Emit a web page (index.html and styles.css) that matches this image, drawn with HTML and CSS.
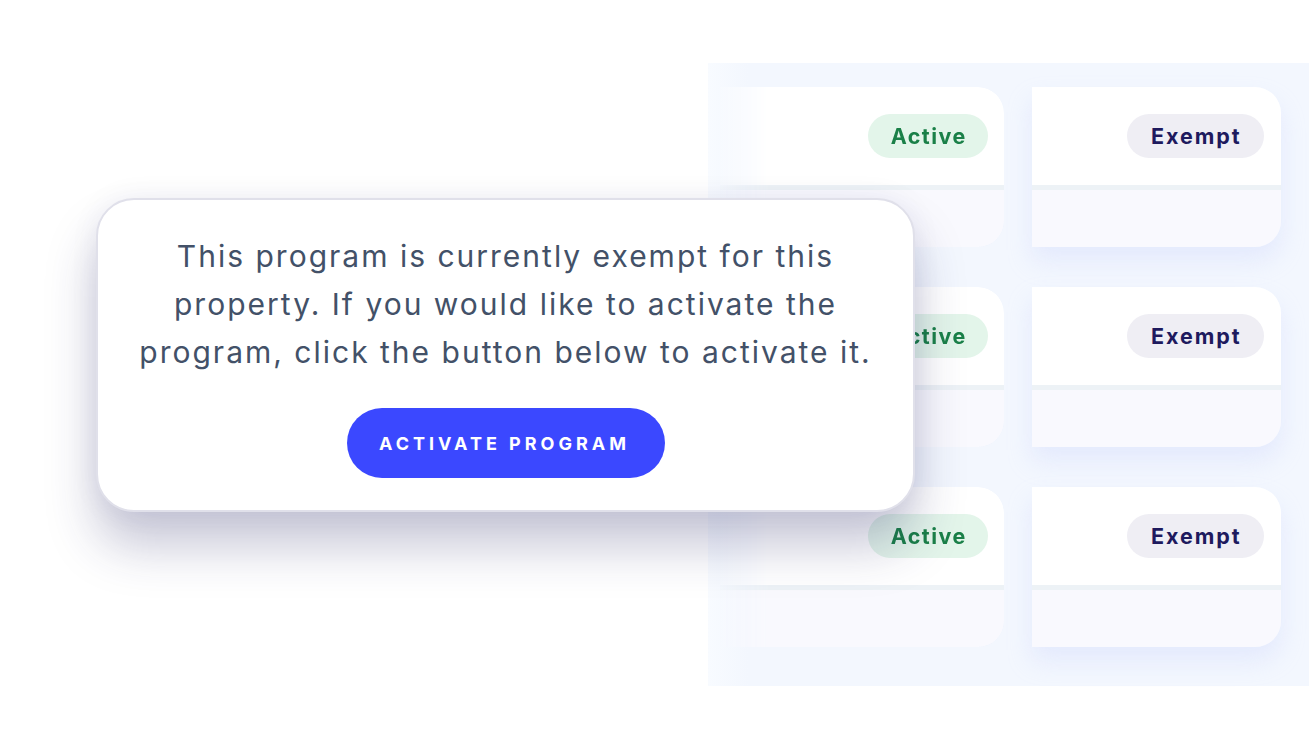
FILE: index.html
```html
<!DOCTYPE html>
<html>
<head>
<meta charset="utf-8">
<link rel="stylesheet" href="styles.css">
</head>
<body>
<div class="stage">
  <div class="panel">
    <div class="card card-left">
      <div class="card-top"><span class="badge badge-active">Active</span></div>
      <div class="card-sep"></div>
      <div class="card-bottom"></div>
    </div>
    <div class="card card-right">
      <div class="card-top"><span class="badge badge-exempt">Exempt</span></div>
      <div class="card-sep"></div>
      <div class="card-bottom"></div>
    </div>
    <div class="card card-left">
      <div class="card-top"><span class="badge badge-active">Active</span></div>
      <div class="card-sep"></div>
      <div class="card-bottom"></div>
    </div>
    <div class="card card-right">
      <div class="card-top"><span class="badge badge-exempt">Exempt</span></div>
      <div class="card-sep"></div>
      <div class="card-bottom"></div>
    </div>
    <div class="card card-left">
      <div class="card-top"><span class="badge badge-active">Active</span></div>
      <div class="card-sep"></div>
      <div class="card-bottom"></div>
    </div>
    <div class="card card-right">
      <div class="card-top"><span class="badge badge-exempt">Exempt</span></div>
      <div class="card-sep"></div>
      <div class="card-bottom"></div>
    </div>
  </div>

  <div class="modal">
    <p class="modal-text">This program is currently exempt for this<br>property. If you would like to activate the<br>program, click the button below to activate it.</p>
    <button class="btn">ACTIVATE PROGRAM</button>
  </div>
</div>
</body>
</html>
```

FILE: styles.css
```css
* { box-sizing: border-box; }
html, body {
  margin: 0;
  padding: 0;
  background: #ffffff;
}
body {
  font-family: "Inter", "Liberation Sans", sans-serif;
}
.stage {
  position: relative;
  width: 1309px;
  height: 730px;
  overflow: hidden;
  display: flex;
  justify-content: flex-end;
  align-items: flex-start;
  padding-top: 63px;
}
.panel {
  width: 601px;
  background: linear-gradient(to right, #f8fbff 0px, #f3f7fe 40px, #f3f7fe 100%);
  padding: 24px 28px 39px 12px;
  display: grid;
  grid-template-columns: 284px 249px;
  column-gap: 28px;
  row-gap: 40px;
}
.card {
  height: 160px;
  border-radius: 0 26px 26px 0;
  display: flex;
  flex-direction: column;
  overflow: hidden;
  box-shadow: 0 14px 24px rgba(190, 200, 250, 0.28);
}
.card-left {
  -webkit-mask-image: linear-gradient(to right, rgba(0,0,0,0.15) 0px, #000 50px);
  mask-image: linear-gradient(to right, rgba(0,0,0,0.15) 0px, #000 50px);
}
.card-top {
  height: 98px;
  background: #ffffff;
  display: flex;
  justify-content: flex-end;
  align-items: flex-start;
  padding: 27px 16px 0 0;
}
.card-right .card-top {
  padding-right: 17px;
}
.card-sep {
  height: 5px;
  background: #edf2f6;
}
.card-bottom {
  flex: 1;
  background: #f9f9fe;
}
.badge {
  height: 44px;
  border-radius: 22px;
  display: flex;
  align-items: center;
  justify-content: center;
  font-weight: 700;
  font-size: 21.5px;
  letter-spacing: 1.5px;
  padding-left: 1.5px;
}
.badge-active {
  width: 120px;
  background: #e3f5ea;
  color: #1a8048;
}
.badge-exempt {
  width: 137px;
  background: #efeef4;
  color: #1e1a5e;
  letter-spacing: 1.9px;
}
.modal {
  position: absolute;
  left: 96px;
  top: 198px;
  width: 819px;
  height: 314px;
  background: #ffffff;
  border: 2px solid #e0e0ea;
  border-radius: 38px;
  box-shadow: 0 34px 50px rgba(40, 40, 100, 0.26), 0 0 30px rgba(40, 40, 100, 0.06);
  display: flex;
  flex-direction: column;
  align-items: center;
  padding-top: 32px;
}
.modal-text {
  margin: 0;
  font-size: 30px;
  line-height: 48px;
  letter-spacing: 2px;
  color: #435168;
  text-align: center;
  font-weight: 400;
  white-space: nowrap;
}
.btn {
  margin-top: 32px;
  width: 318px;
  height: 70px;
  border: none;
  border-radius: 35px;
  background: #3b48ff;
  color: #ffffff;
  font-family: "Inter", "Liberation Sans", sans-serif;
  font-weight: 700;
  font-size: 18px;
  letter-spacing: 4px;
  padding-left: 4px;
}
```
